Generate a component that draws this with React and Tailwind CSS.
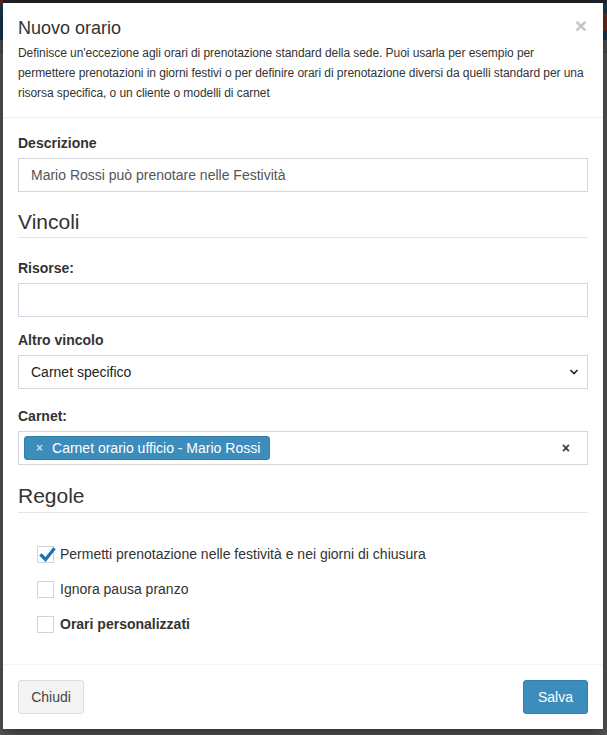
import React from "react";

const FONT = { fontFamily: "'Liberation Sans',Arial,sans-serif" };

function Check({ checked }) {
  return (
    <span className="relative inline-block w-[17px] h-[17px] border border-[#cfd3da] bg-white shrink-0">
      {checked && (
        <svg className="absolute left-[1px] top-[-1px]" width="17" height="17" viewBox="0 0 17 17">
          <path d="M2.5 9.5 L6.5 13.5 L14.5 3.5" fill="none" stroke="#1f70b0" strokeWidth="3.2" strokeLinecap="square" />
        </svg>
      )}
    </span>
  );
}

function Legend({ children, className = "" }) {
  return <div className={"border-b border-[#e5e5e5] text-[21px] text-[#333] " + className}>{children}</div>;
}

function Label({ children }) {
  return <div className="text-[14px] leading-[20px] font-bold text-[#333] mb-[5px]">{children}</div>;
}

export default function App() {
  return (
    <div className="relative w-[607px] h-[735px] overflow-hidden bg-[#58595b]" style={FONT}>
      {/* background page behind overlay */}
      <div className="h-[3px] bg-[#1c2327] flex">
        <div className="w-[3px] bg-[#6b1c1c]" />
      </div>
      <div className="h-[37px] bg-[#18384b] flex justify-end items-center">
        <div className="w-[4px] h-[18px] bg-[#6e2a22]" />
      </div>
      <div className="h-[12px] bg-[#505153]" />
      <div className="h-px bg-[#444]" />

      {/* modal */}
      <div className="absolute left-[3px] top-[3px] w-[600px] bg-white shadow-[0_5px_15px_rgba(0,0,0,0.5)]">
        <div className="relative px-[15px] pt-[15px] pb-[14px] border-b border-[#eeeeee]">
          <div className="text-[18px] leading-[20px] text-[#333]">Nuovo orario</div>
          <button className="absolute right-[16px] top-[12px] text-[21px] font-bold leading-none text-[#c4c4c4]">×</button>
          <p className="mt-[5px] whitespace-nowrap tracking-[-0.06px] text-[12px] leading-[20px] text-[#333]">
            Definisce un'eccezione agli orari di prenotazione standard della sede. Puoi usarla per esempio per
            <br />
            permettere prenotazioni in giorni festivi o per definire orari di prenotazione diversi da quelli standard per una
            <br />
            risorsa specifica, o un cliente o modelli di carnet
          </p>
        </div>

        <div className="px-[15px] pt-[15px] pb-[15px]">
          <Label>Descrizione</Label>
          <div className="h-[34px] border border-[#d2d6de] px-[12px] flex items-center text-[14px] text-[#555]">
            Mario Rossi può prenotare nelle Festività
          </div>

          <Legend className="mt-[15px] h-[31px] leading-[30px]">Vincoli</Legend>

          <div className="mt-[20px]">
            <Label>Risorse:</Label>
            <div className="h-[34px] border border-[#d2d6de]" />
          </div>

          <div className="mt-[13px]">
            <Label>Altro vincolo</Label>
            <div className="h-[34px] border border-[#d2d6de] pl-[12px] pr-[8px] flex items-center justify-between text-[14px] text-[#222]">
              <span>Carnet specifico</span>
              <svg width="10" height="8" viewBox="0 0 10 8">
                <path d="M1.5 2 L5 5.5 L8.5 2" fill="none" stroke="#222" strokeWidth="1.6" />
              </svg>
            </div>
          </div>

          <div className="mt-[17px]">
            <Label>Carnet:</Label>
            <div className="h-[34px] border border-[#d2d6de] pl-[5px] pr-[17px] flex items-center justify-between">
              <span className="h-[24px] rounded-[3px] bg-[#3c8dbc] border border-[#367fa9] pl-[11px] pr-[9px] flex items-center text-[14px] text-white">
                <span className="text-[12px] font-bold text-white/70 mr-[9px]">×</span>
                Carnet orario ufficio - Mario Rossi
              </span>
              <span className="text-[14px] font-bold text-[#333]">×</span>
            </div>
          </div>

          <Legend className="mt-[15px] h-[33px] leading-[32px]">Regole</Legend>

          <div className="mt-[33px] pl-[19px] flex flex-col gap-[18px] text-[14px] text-[#333]">
            <label className="flex items-center gap-[6px] h-[17px]">
              <Check checked />
              <span>Permetti prenotazione nelle festività e nei giorni di chiusura</span>
            </label>
            <label className="flex items-center gap-[6px] h-[17px]">
              <Check />
              <span>Ignora pausa pranzo</span>
            </label>
            <label className="flex items-center gap-[6px] h-[17px]">
              <Check />
              <span className="font-bold">Orari personalizzati</span>
            </label>
          </div>
          <div className="h-[16px]" />
        </div>

        <div className="border-t border-[#f4f4f4] px-[15px] py-[15px] flex justify-between">
          <button className="w-[66px] h-[34px] rounded-[3px] bg-[#f4f4f4] border border-[#dddddd] text-[14px] text-[#444]">
            Chiudi
          </button>
          <button className="w-[65px] h-[34px] rounded-[3px] bg-[#3c8dbc] border border-[#367fa9] text-[14px] text-white">
            Salva
          </button>
        </div>
      </div>
    </div>
  );
}
